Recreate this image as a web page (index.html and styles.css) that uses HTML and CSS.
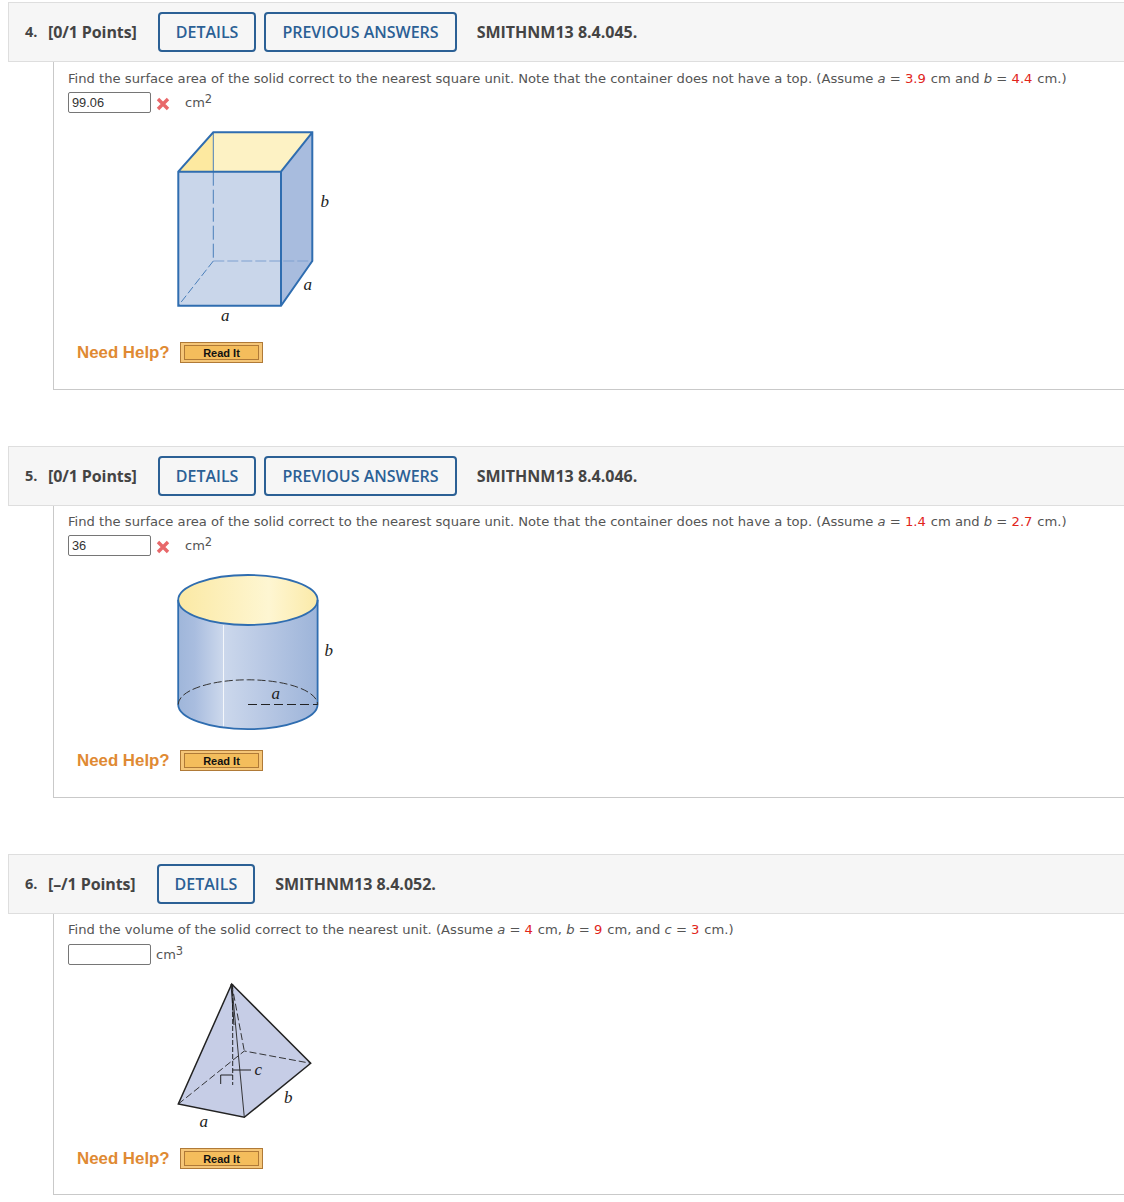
FILE: index.html
```html
<!DOCTYPE html>
<html lang="en">
<head>
<meta charset="utf-8">
<title>Questions</title>
<link rel="stylesheet" href="styles.css">
</head>
<body>
<main class="page">
  <section class="question q4">
    <header class="qhead">
      <span class="qnum">4.</span><span class="points">[0/1 Points]</span>
      <a class="btn">DETAILS</a><a class="btn">PREVIOUS ANSWERS</a>
      <span class="code">SMITHNM13 8.4.045.</span>
    </header>
    <div class="qbody">
      <p class="prompt">Find the surface area of the solid correct to the nearest square unit. Note that the container does not have a top. (Assume <i>a</i> = <span class="val">3.9</span> cm and <i>b</i> = <span class="val">4.4</span> cm.)</p>
      <div class="answer">
        <input class="field" type="text" value="99.06">
        <svg class="wrong" viewBox="0 0 14 14"><path d="M2 2 L12 12 M12 2 L2 12"/></svg>
        <span class="unit spaced">cm<sup>2</sup></span>
      </div>
      <svg class="figure fig-box" viewBox="0 0 180 210">
        <polygon points="53.3,12.3 152.3,12.3 121,51.7 18.3,51.7" fill="#fdf2c4"/>
        <polygon points="53.3,12.3 53.3,51.7 18.3,51.7" fill="#fde9a0"/>
        <rect x="18.3" y="51.7" width="102.7" height="134" fill="#c9d6ea"/>
        <polygon points="121,51.7 152.3,12.3 152.3,141 121,185.7" fill="#a8bcde"/>
        <path class="box-dash" d="M53.3 12.3 V51.7"/>
        <path class="box-dash thin" d="M53.3 51.7 V141" stroke-dasharray="14 4"/>
        <path class="box-dash light" d="M53.3 141 H152.3" stroke-dasharray="11 3"/>
        <path class="box-dash thin" d="M53.3 141 L18.3 185.7" stroke-dasharray="8 3"/>
        <path class="box-line" d="M53.3 12.3 H152.3 V141 L121 185.7 H18.3 V51.7 Z M18.3 51.7 H121 V185.7 M121 51.7 L152.3 12.3"/>
        <text class="lbl" x="160.5" y="87">b</text>
        <text class="lbl" x="143.5" y="170">a</text>
        <text class="lbl" x="61" y="201">a</text>
      </svg>
      <div class="help"><span class="help-label">Need Help?</span><a class="readit"><span>Read It</span></a></div>
    </div>
  </section>

  <section class="question q5">
    <header class="qhead">
      <span class="qnum">5.</span><span class="points">[0/1 Points]</span>
      <a class="btn">DETAILS</a><a class="btn">PREVIOUS ANSWERS</a>
      <span class="code">SMITHNM13 8.4.046.</span>
    </header>
    <div class="qbody">
      <p class="prompt">Find the surface area of the solid correct to the nearest square unit. Note that the container does not have a top. (Assume <i>a</i> = <span class="val">1.4</span> cm and <i>b</i> = <span class="val">2.7</span> cm.)</p>
      <div class="answer">
        <input class="field" type="text" value="36">
        <svg class="wrong" viewBox="0 0 14 14"><path d="M2 2 L12 12 M12 2 L2 12"/></svg>
        <span class="unit spaced">cm<sup>2</sup></span>
      </div>
      <svg class="figure fig-cyl" viewBox="0 0 180 175">
        <defs>
          <linearGradient id="cylSide">
            <stop offset="0" stop-color="#9fb6da"/>
            <stop offset="0.12" stop-color="#a9bddf"/>
            <stop offset="0.32" stop-color="#ccd8ec"/>
            <stop offset="0.62" stop-color="#b8c8e4"/>
            <stop offset="1" stop-color="#9db4d9"/>
          </linearGradient>
          <linearGradient id="cylTop">
            <stop offset="0" stop-color="#fbe9a4"/>
            <stop offset="0.65" stop-color="#fef6d2"/>
            <stop offset="1" stop-color="#fbeaa8"/>
          </linearGradient>
        </defs>
        <path d="M18.2 35 V139.5 A69.7 24.7 0 0 0 157.6 139.5 V35 Z" fill="url(#cylSide)"/>
        <path d="M63.5 60 V162.5" stroke="#f4f7fb" stroke-width="1" fill="none"/>
        <ellipse cx="87.9" cy="35" rx="69.7" ry="25" fill="url(#cylTop)" stroke="#2f6db0" stroke-width="1.8"/>
        <path d="M18.2 35 V139.5 A69.7 24.7 0 0 0 157.6 139.5 V35" fill="none" stroke="#2f6db0" stroke-width="1.8"/>
        <path d="M18.2 139.5 A69.7 24.7 0 0 1 157.6 139.5" fill="none" stroke="#333" stroke-width="1" stroke-dasharray="8 3"/>
        <path d="M88 139.5 H157.6" fill="none" stroke="#222" stroke-width="1" stroke-dasharray="9 4"/>
        <text class="lbl" x="111.5" y="134">a</text>
        <text class="lbl" x="164.5" y="91">b</text>
      </svg>
      <div class="help"><span class="help-label">Need Help?</span><a class="readit"><span>Read It</span></a></div>
    </div>
  </section>

  <section class="question q6">
    <header class="qhead">
      <span class="qnum">6.</span><span class="points">[–/1 Points]</span>
      <a class="btn">DETAILS</a>
      <span class="code">SMITHNM13 8.4.052.</span>
    </header>
    <div class="qbody">
      <p class="prompt">Find the volume of the solid correct to the nearest unit. (Assume <i>a</i> = <span class="val">4</span> cm, <i>b</i> = <span class="val">9</span> cm, and <i>c</i> = <span class="val">3</span> cm.)</p>
      <div class="answer">
        <input class="field" type="text" value="">
        <span class="unit">cm<sup>3</sup></span>
      </div>
      <svg class="figure fig-pyr" viewBox="0 0 160 160">
        <polygon points="66.7,9 13.3,129 79.3,142.3 145.7,88.3" fill="#c6cde6"/>
        <path d="M13.3 129 L79.3 76 L145.7 88.3 M66.7 9 L79.3 76" fill="none" stroke="#222" stroke-width="0.9" stroke-dasharray="7 3"/>
        <path d="M67.7 9 V110" fill="none" stroke="#111" stroke-width="0.9" stroke-dasharray="5 2"/>
        <path d="M66 9 L69 50" fill="none" stroke="#111" stroke-width="0.9"/>
        <path d="M67.7 95 H86 M55.7 109 V100 H67.7" fill="none" stroke="#111" stroke-width="0.9"/>
        <path d="M66.7 9 L79.3 142.3" fill="none" stroke="#222" stroke-width="0.9"/>
        <path d="M66.7 9 L13.3 129 L79.3 142.3 L145.7 88.3 Z" fill="none" stroke="#222" stroke-width="1.5"/>
        <text class="lbl" x="89.5" y="100">c</text>
        <text class="lbl" x="119" y="128">b</text>
        <text class="lbl" x="34.5" y="152">a</text>
      </svg>
      <div class="help"><span class="help-label">Need Help?</span><a class="readit"><span>Read It</span></a></div>
    </div>
  </section>
</main>
</body>
</html>
```
FILE: styles.css
```css
* { box-sizing: border-box; }
html, body { margin: 0; padding: 0; background: #fff; }
body { overflow-x: hidden; }
.page { padding: 2px 0 0 8px; width: 1124px; }
.question { margin-bottom: 56px; }
.qhead {
  height: 60px;
  display: flex;
  align-items: center;
  padding-left: 16px;
  background: #f6f6f6;
  border: 1px solid #dedede;
  border-right: 0;
  font-family: "Open Sans", sans-serif;
  font-weight: 600;
  font-size: 16px;
  color: #444;
}
.qnum { font-size: 14.5px; font-weight: 700; width: 23px; position: relative; top: -1px; }
.points { font-size: 16px; font-weight: 700; margin-right: 21px; letter-spacing: -0.1px; }
.btn {
  height: 40px;
  display: flex;
  align-items: center;
  padding: 0 16px;
  margin-right: 8px;
  border: 2px solid #2b6095;
  border-radius: 4px;
  color: #2b6095;
  font-size: 16px;
}
.code { margin-left: 12px; font-size: 16px; font-weight: 700; }
.qbody {
  margin-left: 45px;
  padding-left: 14px;
  border-left: 1px solid #c9c9c9;
  border-bottom: 1px solid #c9c9c9;
  font-family: "DejaVu Sans", Verdana, sans-serif;
  font-size: 13px;
  color: #555;
}
.q4 .qbody { height: 328px; }
.q5 .qbody { height: 292px; }
.q6 .qbody { height: 281px; }
.prompt { margin: 0; padding-top: 8px; line-height: 17px; height: 30px; font-size: 13.15px; white-space: nowrap; }
.q5 .prompt { padding-top: 7px; height: 29px; }
.q6 .prompt { padding-top: 7px; }
.val { color: #e1251b; margin-right: 0.7px; }
.answer { display: flex; align-items: center; height: 21px; }
.field {
  width: 83px;
  height: 21px;
  padding: 0 3px;
  border: 1px solid #767676;
  border-radius: 2px;
  font-family: "Liberation Sans", Arial, sans-serif;
  font-size: 12.8px;
  color: #333;
  background: #fff;
}
.wrong { width: 14px; height: 14px; margin-left: 5px; margin-top: 2px; }
.wrong path { fill: none; stroke: #e8686a; stroke-width: 3.4; }
.unit { margin-left: 5px; font-size: 13px; line-height: 21px; }
.unit.spaced { margin-left: 15px; }
.unit sup { font-size: 11.5px; line-height: 0; vertical-align: 4px; }
.figure { display: block; }
.fig-box { width: 180px; height: 210px; margin: 7px 0 0 92px; }
.fig-cyl { width: 180px; height: 175px; margin: 9px 0 0 92px; }
.fig-pyr { width: 160px; height: 160px; margin: 10px 0 0 97px; }
.box-line { fill: none; stroke: #2f6db0; stroke-width: 2; stroke-linejoin: miter; }
.box-dash { fill: none; stroke: #4a7fba; stroke-width: 1; }
.box-dash.light { stroke: #7f9fcf; stroke-width: 1.2; }
.lbl { font-family: "Liberation Serif", "Times New Roman", serif; font-style: italic; font-size: 17px; fill: #222; }
.help { display: flex; align-items: center; height: 21px; margin-left: 8px; }
.fig-box + .help { margin-top: 12px; }
.fig-cyl + .help { margin-top: 10px; }
.fig-pyr + .help { margin-top: 13px; }
.help-label {
  font-family: "Liberation Sans", Arial, sans-serif;
  font-weight: 700;
  font-size: 16.85px;
  color: #e08a33;
  width: 104px;
  padding-left: 1px;
}
.readit {
  width: 83px;
  height: 21px;
  padding: 2px 3px;
  border: 1px solid #b07a37;
  background: #f5c678;
  display: block;
}
.readit span {
  display: block;
  height: 15px;
  line-height: 14px;
  text-align: center;
  border: 1px solid #b07a37;
  background: #f4bd5c;
  font-family: "Liberation Sans", Arial, sans-serif;
  font-weight: 700;
  font-size: 11px;
  color: #111;
}
```
